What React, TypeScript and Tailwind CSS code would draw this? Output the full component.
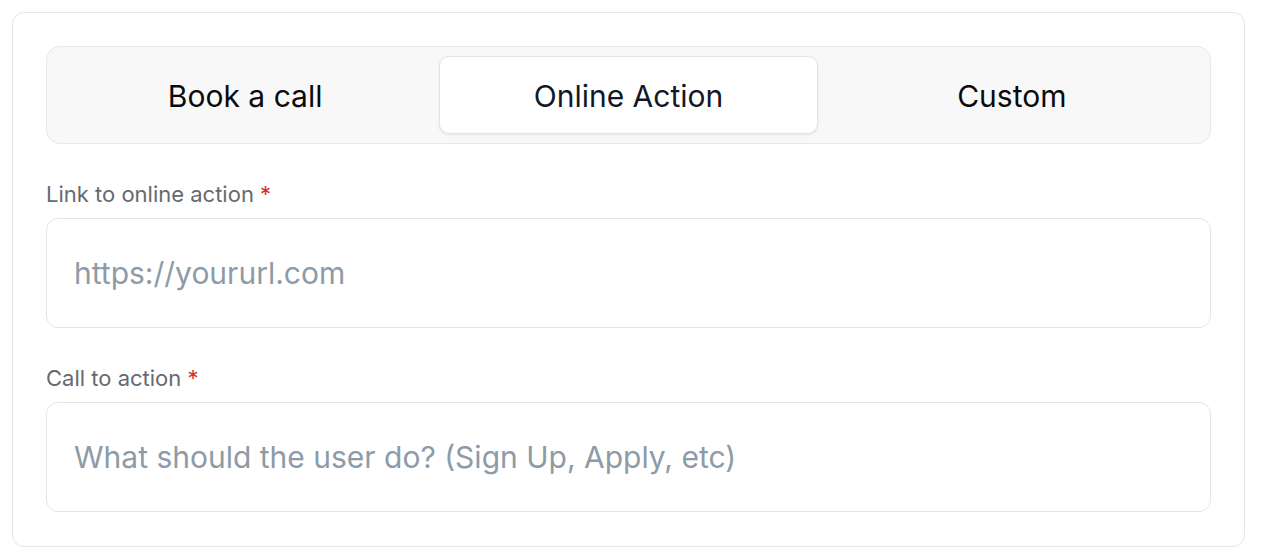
import React from "react";

export default function App() {
  const tabs = ["Book a call", "Online Action", "Custom"];
  const active = 1;
  return (
    <div className="w-[1262px] h-[560px] bg-white p-3" style={{ fontFamily: "Inter, 'Noto Sans', sans-serif" }}>
      <div className="w-[1233px] h-[535px] border border-[#e6e6e6] rounded-[12px] px-[33px] pt-[33px]">
        <div className="h-[98px] bg-[#f8f8f8] border border-[#e8e8e8] rounded-[14px] p-[9px] grid grid-cols-3 gap-[5px]">
          {tabs.map((t, i) => (
            <div
              key={t}
              className={
                i === active
                  ? "flex items-center justify-center bg-white border border-[#e3e3e3] rounded-[10px] shadow-[0_1px_3px_rgba(0,0,0,0.08)] text-[30px] leading-[36px] pt-[2px] text-[#111827]"
                  : "flex items-center justify-center text-[30px] leading-[36px] pt-[2px] text-[#0a0a0a]"
              }
            >
              {t}
            </div>
          ))}
        </div>
        <div className="mt-[35px]">
          <div className="text-[22px] leading-[28px] text-[#666a70] pt-[1px]">
            Link to online action <span className="text-[#d32f2f]">*</span>
          </div>
          <div className="mt-[10px] h-[110px] border border-[#e5e5e5] rounded-[12px] flex items-center px-[27px]">
            <input
              className="w-full outline-none text-[30px] text-[#111] placeholder:text-[#8d9ba8] bg-transparent"
              placeholder="https://yoururl.com"
              style={{ fontFamily: "Inter, 'Noto Sans', sans-serif" }}
            />
          </div>
        </div>
        <div className="mt-[35px]">
          <div className="text-[22px] leading-[28px] text-[#666a70] pt-[1px]">
            Call to action <span className="text-[#d32f2f]">*</span>
          </div>
          <div className="mt-[10px] h-[110px] border border-[#e5e5e5] rounded-[12px] flex items-center px-[27px]">
            <input
              className="w-full outline-none text-[30px] text-[#111] placeholder:text-[#8d9ba8] bg-transparent"
              placeholder="What should the user do? (Sign Up, Apply, etc)"
              style={{ fontFamily: "Inter, 'Noto Sans', sans-serif" }}
            />
          </div>
        </div>
      </div>
    </div>
  );
}
